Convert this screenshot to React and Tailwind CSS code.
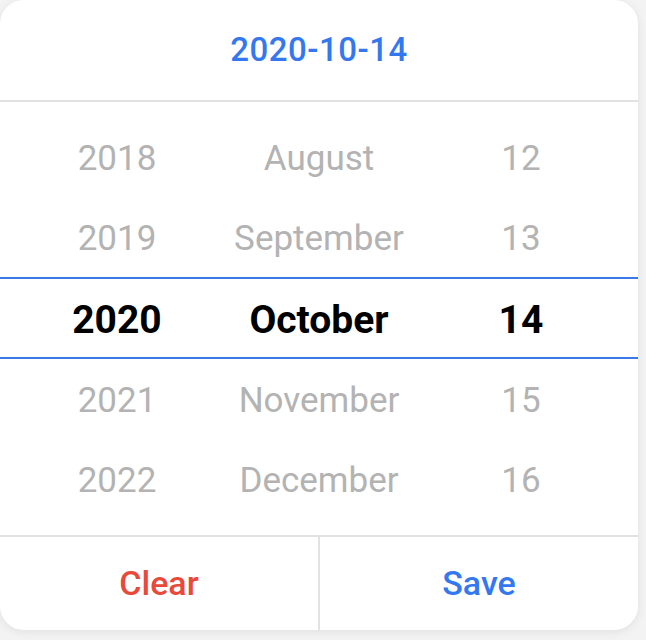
const rows = [
  { year: '2018', month: 'August', day: '12' },
  { year: '2019', month: 'September', day: '13' },
  { year: '2020', month: 'October', day: '14', active: true },
  { year: '2021', month: 'November', day: '15' },
  { year: '2022', month: 'December', day: '16' },
];

export default function App() {
  return (
    <div className="w-[646px] h-[640px] bg-[#f3f3f3] font-['Roboto','Liberation_Sans',sans-serif]">
      <div className="w-[638px] h-[630px] bg-white rounded-[24px] shadow-[0_2px_10px_rgba(0,0,0,0.08)] flex flex-col overflow-hidden">
        {/* encabezado con la fecha elegida */}
        <div className="h-[102px] flex items-center justify-center border-b-2 border-[#e2e2e2] shrink-0">
          <span className="text-[33px] font-medium text-[#3478f0] tracking-[0.5px]">2020-10-14</span>
        </div>

        {/* ruedas de año / mes / día */}
        <div className="pt-[15px] pb-4 shrink-0">
          {rows.map((r) => (
            <div
              key={r.year}
              className={
                r.active
                  ? 'h-[82px] pt-[4px] grid grid-cols-3 px-4 items-center text-center border-y-2 border-[#3a7ae6] text-black font-bold text-[39px]'
                  : 'h-[80px] pt-[5px] grid grid-cols-3 px-4 items-center text-center text-[#b3b3b3] text-[35px]'
              }
            >
              <span>{r.year}</span>
              <span>{r.month}</span>
              <span>{r.day}</span>
            </div>
          ))}
        </div>

        {/* botones */}
        <div className="flex-1 flex border-t-2 border-[#e2e2e2]">
          <button className="flex-1 flex items-center justify-center border-r-2 border-[#e2e2e2] text-[34px] font-medium text-[#e8493b]">
            Clear
          </button>
          <button className="flex-1 flex items-center justify-center text-[34px] font-medium text-[#3478f0]">
            Save
          </button>
        </div>
      </div>
    </div>
  );
}
